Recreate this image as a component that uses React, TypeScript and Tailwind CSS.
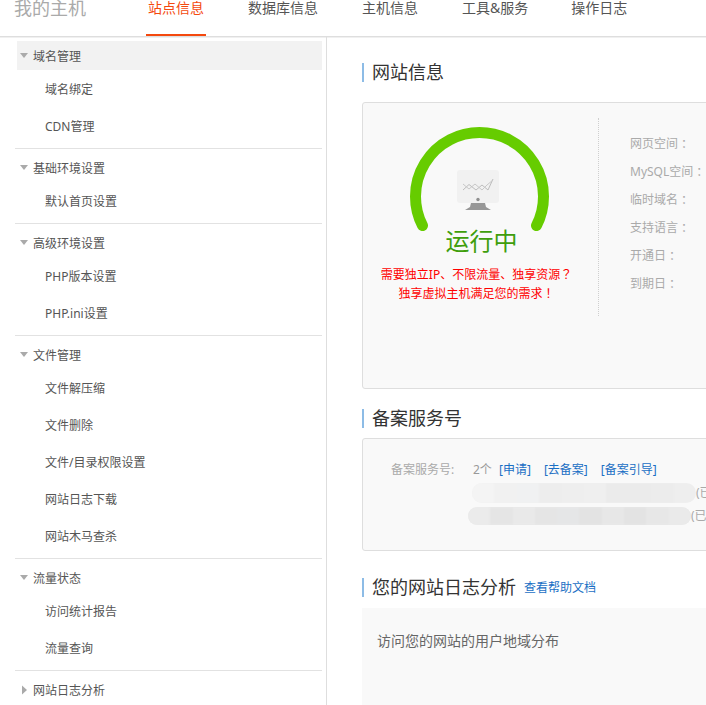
import React from "react";

const FONT = "font-['Noto_Sans','Noto_Sans_CJK_SC',sans-serif]";
const TC = "font-['Noto_Sans_CJK_TC',sans-serif]";

const tabs = ["站点信息", "数据库信息", "主机信息", "工具&服务", "操作日志"];

const groups: { title: string; items: string[]; active?: boolean; closed?: boolean }[] = [
  { title: "域名管理", items: ["域名绑定", "CDN管理"], active: true },
  { title: "基础环境设置", items: ["默认首页设置"] },
  { title: "高级环境设置", items: ["PHP版本设置", "PHP.ini设置"] },
  { title: "文件管理", items: ["文件解压缩", "文件删除", "文件/目录权限设置", "网站日志下载", "网站木马查杀"] },
  { title: "流量状态", items: ["访问统计报告", "流量查询"] },
  { title: "网站日志分析", items: [], closed: true },
];

const infoLabels = ["网页空间", "MySQL空间", "临时域名", "支持语言", "开通日", "到期日"];

function SectionTitle({ children }: { children: React.ReactNode }) {
  return (
    <div className="flex h-[19px] items-center border-l-2 border-[#8dbce6] pl-[8px] text-[18px] leading-[19px] text-[#333]">
      {children}
    </div>
  );
}

function Gauge() {
  return (
    <svg width="140" height="113" viewBox="0 0 140 113" className="ml-[46px] block overflow-visible">
      <path
        d="M13.5 105.6 A64 64 0 1 1 127.5 105.6"
        fill="none"
        stroke="#66cc00"
        strokeWidth="11"
        strokeLinecap="round"
      />
      <rect x="48" y="50" width="42" height="33" rx="3" fill="#f1f1f1" />
      <path d="M54 70 L60 64.5 L67 70 L73 65 L79 70 L84 59" fill="none" stroke="#bdbdbd" strokeWidth="1" />
      <path d="M54 64 L60 69 L66 64 L73 70 L78 65 L84 60" fill="none" stroke="#c8c8c8" strokeWidth="1" />
      <circle cx="69" cy="79.5" r="1.7" fill="#8f8f8f" />
      <path d="M62 83 H76 L77 87 L82 90 H56 L61 87 Z" fill="#979797" />
    </svg>
  );
}

function Blocks({ tones }: { tones: string[] }) {
  return (
    <div className="flex h-full w-full blur-[1px]">
      {tones.map((t, i) => (
        <div key={i} className="h-full flex-1" style={{ background: t }} />
      ))}
    </div>
  );
}

export default function App() {
  return (
    <div className={`${FONT} h-[705px] w-[706px] overflow-hidden bg-white text-[12px]`}>
      <header className="flex h-[37px] items-start overflow-hidden border-b border-[#dedede] shadow-[0_1px_0_#f0f0f0]">
        <div className="ml-[14px] -mt-px w-[132px] text-[18px] leading-[18px] text-[#aaa]">我的主机</div>
        <nav className="flex gap-10">
          {tabs.map((t, i) => (
            <div
              key={t}
              className={
                i === 0
                  ? "h-[36px] border-b-2 border-[#f4490e] px-[2px] text-[14px] leading-[16px] text-[#f4490e]"
                  : i === 3
                    ? "-mr-px h-[36px] px-[2px] text-[14px] leading-[16px] text-[#555]"
                    : "h-[36px] px-[2px] text-[14px] leading-[16px] text-[#555]"
              }
            >
              {t}
            </div>
          ))}
        </nav>
      </header>

      <div className="flex h-[668px]">
        <aside className="h-full w-[327px] shrink-0 overflow-hidden border-r border-[#dedede] pt-[4px]">
          {groups.map((g) => (
            <div key={g.title} className="ml-[15px] mb-[4px] w-[307px] border-b border-[#e2e2e2] pb-[4px] last:border-b-0">
              <div
                className={
                  g.active
                    ? "ml-[2px] flex h-[29px] items-center bg-[#f2f2f2] pl-[3px] text-[#555]"
                    : "ml-[2px] flex h-[29px] items-center pl-[3px] text-[#555]"
                }
              >
                <span className="flex w-[13px] items-center">
                  {g.closed ? (
                    <svg width="8" height="10" viewBox="0 0 8 10" className="ml-[2px]">
                      <path d="M0 0.5 L5 5 L0 9.5 Z" fill="#aaa" />
                    </svg>
                  ) : (
                    <svg width="8" height="5" viewBox="0 0 8 5">
                      <path d="M0 0 H8 L4 5 Z" fill="#aaa" />
                    </svg>
                  )}
                </span>
                <span className="pt-[2px]">{g.title}</span>
              </div>
              {g.items.map((it) => (
                <div key={it} className="flex h-[37px] items-center pl-[30px] pt-[2px] text-[#555]">
                  {it}
                </div>
              ))}
            </div>
          ))}
        </aside>

        <main className="min-w-0 flex-1 overflow-hidden pl-[35px] pt-[26px]">
          <div className="w-[500px]">
            <SectionTitle>网站信息</SectionTitle>

            <section className="mt-[20px] flex h-[287px] items-start rounded-[3px] border border-[#dedede] bg-[#f9f9f9] pt-[15px]">
              <div className="h-[198px] w-[236px] shrink-0 border-r border-dotted border-[#cfcfcf] pt-[2px]">
                <Gauge />
                <div className="-mt-[6px] pl-[2px] text-center text-[24px] leading-[28px] text-[#3f9e0c]">运行中</div>
                <div className="mt-[10px] pr-[8px] text-center leading-[18px] text-[#ff0000]">
                  <div>
                    需要独立IP、不限流量、独享资源<span className={TC}>？</span>
                  </div>
                  <div>
                    独享虚拟主机满足您的需求<span className={TC}>！</span>
                  </div>
                </div>
              </div>
              <div className="ml-[31px] pt-[12px] text-[#aaa]">
                {infoLabels.map((l) => (
                  <div key={l} className="flex h-[28px] items-center">
                    {l}
                    <span className={TC}>：</span>
                  </div>
                ))}
              </div>
            </section>

            <div className="mt-[20px]">
              <SectionTitle>备案服务号</SectionTitle>
            </div>

            <section className="mt-[10px] h-[113px] rounded-[3px] border border-[#dedede] bg-[#f9f9f9] pl-[28px] pt-[20px]">
              <div className="flex h-[20px] items-center pt-[2px]">
                <div className="w-[82px] shrink-0 text-[#aaa]">备案服务号:</div>
                <div className="flex items-center text-[#999]">
                  <span className="w-[26px]">2个</span>
                  <span className="flex gap-[13px] text-[#1a6fc4]">
                    <span>[申请]</span>
                    <span>[去备案]</span>
                    <span>[备案引导]</span>
                  </span>
                </div>
              </div>
              <div className="ml-[81px] mt-[4px] flex h-[20px] items-center text-[#aaa]">
                <div className="h-[20px] w-[224px] shrink-0 overflow-hidden rounded-full bg-[#f1f1f1]">
                  <Blocks tones={["#f4f4f4", "#f1f1f1", "#f0f1f2", "#ededed", "#eeeeee", "#efefef", "#ebebeb", "#ebebeb", "#ececec", "#eeeeee"]} />
                </div>
                <span className="whitespace-nowrap">(已</span>
              </div>
              <div className="ml-[77px] mt-[4px] flex h-[18px] items-center text-[#aaa]">
                <div className="h-[18px] w-[223px] shrink-0 overflow-hidden rounded-full bg-[#ebebeb]">
                  <Blocks tones={["#ebebeb", "#e5e5e5", "#e9e9e9", "#e5e5e5", "#e5e6e7", "#e3e3e3", "#e7e7e7", "#e3e3e3", "#e7e7e7", "#eaeaea"]} />
                </div>
                <span className="whitespace-nowrap">(已</span>
              </div>
            </section>

            <div className="mt-[27px]">
              <SectionTitle>
                <span>您的网站日志分析</span>
                <span className="ml-[8px] text-[12px] text-[#1a6fc4]">查看帮助文档</span>
              </SectionTitle>
            </div>

            <section className="mt-[11px] h-[200px] bg-[#f9f9f9] pl-[15px] pt-[23px]">
              <div className="text-[14px] leading-[20px] text-[#666]">访问您的网站的用户地域分布</div>
            </section>
          </div>
        </main>
      </div>
    </div>
  );
}
